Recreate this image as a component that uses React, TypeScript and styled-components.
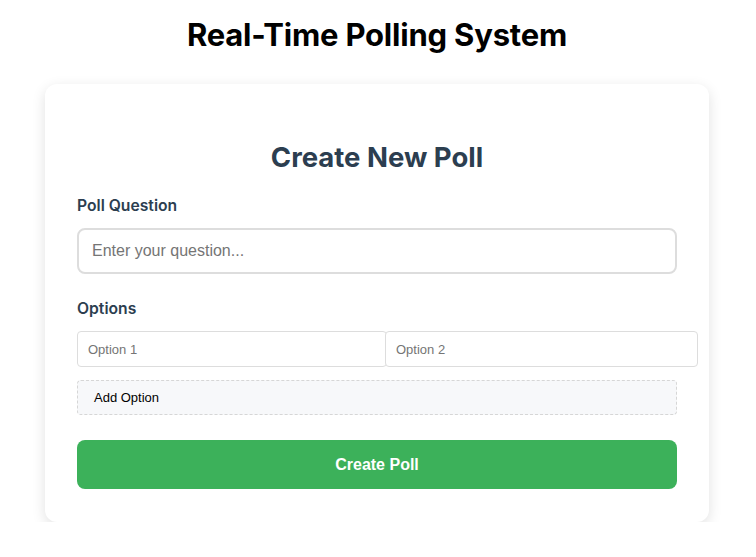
import React, { useState } from 'react'
import styled, { createGlobalStyle } from 'styled-components'

const GlobalStyle = createGlobalStyle`
  body {
    margin: 0;
    background: #ffffff;
    font-family: Inter, "Liberation Sans", sans-serif;
  }
`

const Page = styled.div`
  padding: 17px 2px 0 0;
  display: flex;
  flex-direction: column;
  align-items: center;
`

const Title = styled.h1`
  margin: 0;
  font-size: 31px;
  line-height: 36px;
  font-weight: 700;
  color: #000;
  letter-spacing: -0.2px;
`

const Card = styled.div`
  margin-top: 31px;
  width: 600px;
  padding: 32px 32px 33px;
  background: #fff;
  border-radius: 12px;
  box-shadow: 0 4px 14px rgba(0, 0, 0, 0.12);
`

const CardTitle = styled.h2`
  margin: 26px 0 24px;
  text-align: center;
  font-size: 27.5px;
  line-height: 31px;
  font-weight: 700;
  color: #2c3e50;
`

const Label = styled.label<{ $top?: number }>`
  display: block;
  margin-top: ${p => p.$top ?? 0}px;
  margin-bottom: 13px;
  font-size: 15.7px;
  line-height: 18px;
  font-weight: 600;
  color: #2c3e50;
`

const QuestionInput = styled.input`
  box-sizing: border-box;
  width: 100%;
  height: 46px;
  padding: 0 13px;
  border: 2px solid #dddddd;
  border-radius: 8px;
  font-family: "Liberation Sans", Arial, sans-serif;
  font-size: 16px;
  outline: none;
  &::placeholder { color: #757575; }
`

const OptionsRow = styled.div`
  display: flex;
`

const OptionInput = styled.input`
  box-sizing: border-box;
  flex: 0 0 auto;
  width: 310px;
  height: 36px;
  padding: 0 10px;
  border: 1px solid #dddddd;
  border-radius: 4px;
  font-family: "Liberation Sans", Arial, sans-serif;
  font-size: 13px;
  outline: none;
  & + & { margin-left: -2px; width: 313px; }
  &::placeholder { color: #757575; }
`

const AddButton = styled.button`
  display: block;
  box-sizing: border-box;
  width: 100%;
  height: 35px;
  margin-top: 13px;
  padding: 0 16px;
  text-align: left;
  background: #f7f8fa;
  border: 1px dashed #d6d6d6;
  border-radius: 4px;
  font-family: "Liberation Sans", Arial, sans-serif;
  font-size: 13px;
  color: #000;
  cursor: pointer;
`

const SubmitButton = styled.button`
  display: block;
  width: 100%;
  height: 49px;
  margin-top: 25px;
  border: none;
  border-radius: 8px;
  background: #3cb15a;
  color: #fff;
  font-family: "Liberation Sans", Arial, sans-serif;
  font-size: 16px;
  font-weight: 700;
  cursor: pointer;
`

export default function App() {
  const [question, setQuestion] = useState('')
  const [options, setOptions] = useState(['', ''])

  return (
    <>
      <GlobalStyle />
      <Page>
        <Title>Real-Time Polling System</Title>
        <Card>
          <CardTitle>Create New Poll</CardTitle>
          <Label>Poll Question</Label>
          <QuestionInput
            placeholder="Enter your question..."
            value={question}
            onChange={e => setQuestion(e.target.value)}
          />
          <Label $top={26}>Options</Label>
          <OptionsRow>
            {options.map((opt, i) => (
              <OptionInput
                key={i}
                placeholder={`Option ${i + 1}`}
                value={opt}
                onChange={e => setOptions(options.map((o, j) => (j === i ? e.target.value : o)))}
              />
            ))}
          </OptionsRow>
          <AddButton type="button">Add Option</AddButton>
          <SubmitButton type="button">Create Poll</SubmitButton>
        </Card>
      </Page>
    </>
  )
}
